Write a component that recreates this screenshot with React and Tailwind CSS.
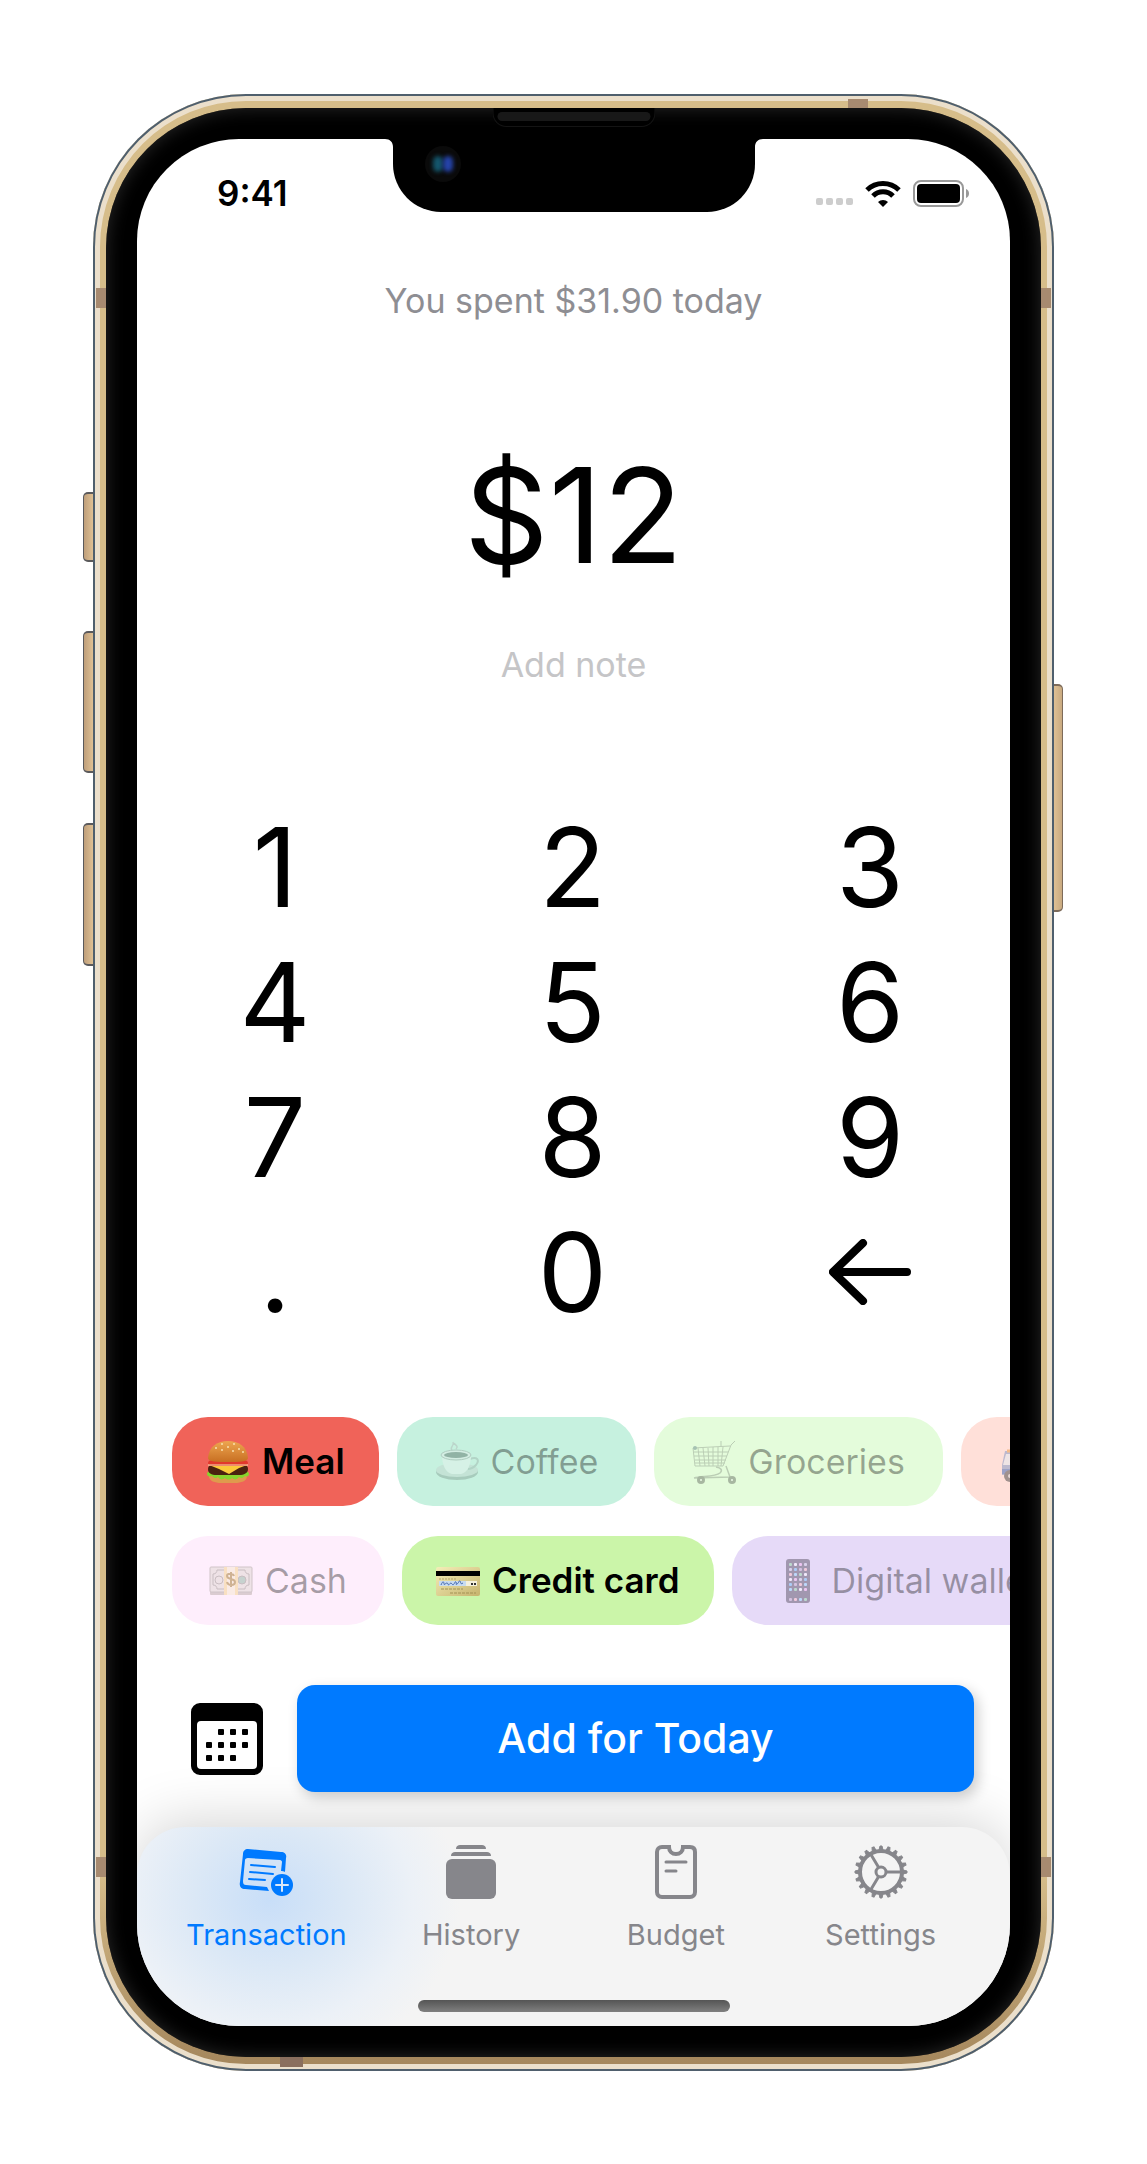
import { useState } from "react";

const KEYS = ["1", "2", "3", "4", "5", "6", "7", "8", "9", ".", "0"];

function BurgerIcon() {
  return (
    <svg viewBox="0 0 44 44" className="h-11 w-11" aria-hidden="true">
      <defs>
        <linearGradient id="bun" x1="0" y1="0" x2="0" y2="1">
          <stop offset="0" stopColor="#eda650" />
          <stop offset="1" stopColor="#c86f22" />
        </linearGradient>
      </defs>
      <path d="M3 36h38c0 5-6 7-12 7H15C9 43 3 41 3 36Z" fill="#df9a4d" />
      <path d="M1 34c0-3 5-4 21-4s21 1 21 4c0 2-2 3-4 2-2 2-4 3-6 1-2 3-5 3-7 1-2 2-5 2-7 0-2 2-5 2-7-1-2 2-4 1-6-1-3 1-5 0-5-2Z" fill="#86d52c" />
      <path d="M2 29c0-3 2-4 4-4h32c3 0 4 2 4 4 0 4-4 6-9 6H11c-6 0-9-2-9-6Z" fill="#4a220f" />
      <path d="M3 25h38l-8 3-10 6-10-5Z" fill="#fbc93a" />
      <path d="M2 23c0-2 2-3 5-3h30c3 0 5 1 5 3s-3 3-5 3H7c-3 0-5-1-5-3Z" fill="#e2382c" />
      <path d="M2 25h40" stroke="#f7dfb0" strokeWidth="1" />
      <path d="M2 18C3 6 12 1 22 1s19 5 20 17c0 4-9 4-20 4S2 22 2 18Z" fill="url(#bun)" />
      <g fill="#f8dfae">
        <circle cx="10" cy="8" r="1" /><circle cx="16" cy="4" r="1" /><circle cx="22" cy="7" r="1" />
        <circle cx="28" cy="4" r="1" /><circle cx="33" cy="9" r="1" /><circle cx="16" cy="10" r="1" />
        <circle cx="27" cy="11" r="1" /><circle cx="37" cy="12" r="1" />
      </g>
    </svg>
  );
}

function CoffeeIcon() {
  return (
    <svg viewBox="0 0 44 44" className="h-11 w-11 opacity-60" aria-hidden="true">
      <path d="M17 10c-3-3 3-4 1-8M21 9c3-3-1-4-2-6" fill="none" stroke="#b5c4be" strokeWidth="1.5" />
      <ellipse cx="22" cy="32" rx="21" ry="8" fill="#93b3a6" />
      <ellipse cx="22" cy="30" rx="21" ry="7" fill="#c3dbd1" />
      <path d="M35 19c7-3 10 1 6 6-2 2-5 4-8 4" fill="none" stroke="#a5c2b6" strokeWidth="2" />
      <path d="M7 15h29c0 10-4 18-10 19h-9C11 33 7 25 7 15Z" fill="#e2f2eb" />
      <ellipse cx="21" cy="15" rx="15" ry="5" fill="#dcebe5" stroke="#9fb5ac" />
      <ellipse cx="21" cy="15" rx="12" ry="3" fill="#6f8b80" />
    </svg>
  );
}

function CartIcon() {
  return (
    <svg viewBox="0 0 44 44" className="h-11 w-11 opacity-40" aria-hidden="true">
      <g fill="none" stroke="#7f8a7d">
        <path d="m43 1-4 4-8 21H3L1 8l37-2" strokeWidth="1" />
        <path d="M2 12h34M2 16h33M3 20h31M3 23h30M6 8l2 18M11 8l2 18M16 8l1 18M21 7v19M26 7v19M31 7l-2 19M29 1v5" strokeWidth="1" />
        <path d="M24 27c5 1 7 3 4 6-5 4-18 3-26 5M34 26l4 11-36 1" strokeWidth="1.5" />
      </g>
      <circle cx="9" cy="40" r="4" fill="#4d524c" /><circle cx="40" cy="40" r="4" fill="#4d524c" />
      <circle cx="9" cy="40" r="1" fill="#fff" /><circle cx="40" cy="40" r="1" fill="#fff" />
      <circle cx="3" cy="8" r="2" fill="#4a6e78" />
    </svg>
  );
}

function TruckIcon() {
  return (
    <svg viewBox="0 0 44 44" className="h-11 w-11 opacity-50" aria-hidden="true">
      <path d="M13 5h31v30H13Z" fill="#d8d8d8" />
      <path d="M4 11h12v24H1V25Z" fill="#7c93c5" />
      <path d="M5 14h6v11H2Z" fill="#dfe9f2" />
      <path d="M1 29h15v5H1Z" fill="#3a64b5" />
      <path d="M6 11h5" stroke="#ec963a" strokeWidth="3" />
      <circle cx="9" cy="36" r="6" fill="#444" /><circle cx="9" cy="36" r="2" fill="#ccc" />
    </svg>
  );
}

function CashIcon() {
  return (
    <svg viewBox="0 0 44 44" className="h-11 w-11 opacity-50" aria-hidden="true">
      <rect x="1" y="9" width="42" height="27" rx="1" fill="#b9aca8" />
      <rect x="1" y="8" width="42" height="25" rx="1" fill="#dfd8d2" stroke="#a39b95" />
      <path d="M4 15c3 0 4-2 4-4h28c0 2 1 4 4 4v11c-3 0-4 2-4 4H8c0-2-1-4-4-4Z" fill="none" stroke="#968e88" />
      <circle cx="10" cy="21" r="4" fill="none" stroke="#968e88" />
      <circle cx="33" cy="21" r="4" fill="#8fb7a3" stroke="#968e88" />
      <rect x="15" y="8" width="14" height="28" fill="#f6d489" />
      <rect x="18" y="8" width="8" height="28" fill="#f7e9d0" />
      <path d="M25 17c-1-3-7-3-7 0 0 4 8 2 8 6 0 4-7 4-8 0M22 13v15" fill="none" stroke="#a1772c" strokeWidth="2" />
    </svg>
  );
}

function CardIcon() {
  return (
    <svg viewBox="0 0 44 44" className="h-11 w-11" aria-hidden="true">
      <defs>
        <linearGradient id="card" x1="0" y1="0" x2="1" y2="1">
          <stop offset="0" stopColor="#f4eeb8" />
          <stop offset="1" stopColor="#c6b36d" />
        </linearGradient>
      </defs>
      <rect x="0" y="8" width="44" height="29" rx="2" fill="url(#card)" />
      <path d="M0 12h44v5H0Z" fill="#000" />
      <path d="M3 22h27v5H3Z" fill="#c8dcf0" />
      <path d="M30 22h11v5H30Z" fill="#f4f0dc" />
      <path d="M5 26c2-5 3-3 3-1s3-3 4 0 2-3 4 0 3-4 4-2-1 3 1 2 2-4 3-3 0 4 3 2" fill="none" stroke="#4468b0" />
      <path d="M35 25h5" stroke="#333" strokeWidth="2" strokeDasharray="2 1" />
      <path d="M5 30h22M14 34h26" stroke="#a39254" strokeDasharray="3 1" />
      <path d="M3 20h18" stroke="#b3a56b" strokeWidth="1" strokeDasharray="2 1" />
    </svg>
  );
}

function PhoneIcon() {
  const colors = ["#7ed98f", "#fff", "#f6a6e8", "#c8c8d8", "#58b7f5", "#bba0c0", "#ffb0b0", "#7fd4ff"];
  return (
    <svg viewBox="0 0 44 44" className="h-11 w-11 opacity-40" aria-hidden="true">
      <rect x="10" y="0" width="24" height="44" rx="3" fill="#3b3443" />
      {[0, 1, 2, 3, 4, 5, 7].map((row) =>
        [0, 1, 2, 3].map((col) => (
          <rect key={`${row}-${col}`} x={13 + col * 5} y={4 + row * 5} width="3" height="3" rx="1" fill={colors[(row * 3 + col) % 8]} />
        ))
      )}
    </svg>
  );
}

const CATEGORIES = [
  { label: "Meal", Icon: BurgerIcon, color: "bg-[#f06359]", pad: "px-[34px]" },
  { label: "Coffee", Icon: CoffeeIcon, color: "bg-[#c6f1df]", pad: "px-[38px]" },
  { label: "Groceries", Icon: CartIcon, color: "bg-[#e4fcdb]", pad: "px-[38px]" },
  { label: "Transport", Icon: TruckIcon, color: "bg-[#ffe0d9]", pad: "px-10", iconOnly: true },
];

const METHODS = [
  { label: "Cash", Icon: CashIcon, color: "bg-[#feeefc]", pad: "px-[37px]" },
  { label: "Credit card", Icon: CardIcon, color: "bg-[#cbf5a9]", pad: "px-[34px]" },
  { label: "Digital wallet", Icon: PhoneIcon, color: "bg-[#e6daf8]", pad: "px-11" },
];

function ChipRow({ items, name, selected, onSelect }) {
  return (
    <div role="group" aria-label={name} className="flex gap-[18px] overflow-hidden pl-[35px]">
      {items.map(({ label, Icon, color, pad, iconOnly }) => (
        <button
          key={label}
          type="button"
          aria-label={label}
          aria-pressed={selected === label}
          onClick={() => onSelect(label)}
          className={`flex h-[89px] shrink-0 items-center gap-3 rounded-[36px] whitespace-nowrap ${color} ${pad} ${
            selected === label ? "text-[35px] font-semibold text-black" : "text-[34px] text-black/35"
          }`}
        >
          <Icon />
          {iconOnly ? null : label}
        </button>
      ))}
    </div>
  );
}

function BackArrow() {
  return (
    <svg viewBox="0 0 82 66" className="h-[66px] w-[82px]" fill="none" stroke="currentColor" strokeWidth="8" strokeLinecap="round" strokeLinejoin="round" aria-hidden="true">
      <path d="M78 33H5M34 4 4 33l30 29" />
    </svg>
  );
}

function CalendarIcon() {
  const dots = [[28, 26], [40, 26], [52, 26], [16, 39], [28, 39], [40, 39], [52, 39], [16, 52], [28, 52], [40, 52]];
  return (
    <svg viewBox="0 0 74 72" className="h-[72px] w-[74px]" aria-hidden="true">
      <path fillRule="evenodd" d="M10 0h54a9 9 0 0 1 9 9v54a9 9 0 0 1-9 9H10a9 9 0 0 1-9-9V9a9 9 0 0 1 9-9Zm1 18a4 4 0 0 0-4 4v40a4 4 0 0 0 4 4h52a4 4 0 0 0 4-4V22a4 4 0 0 0-4-4Z" />
      {dots.map(([x, y]) => (
        <rect key={`${x}-${y}`} x={x} y={y} width="6" height="6" rx="1" />
      ))}
    </svg>
  );
}

function TransactionIcon() {
  return (
    <svg viewBox="0 0 54 54" className="h-[54px] w-[54px]" aria-hidden="true">
      <path fill="currentColor" fillRule="evenodd" d="M9 4l33 3c4 0 6 3 5 6l-1 14c-1-1-3-1-4-1l1-9c0-1-1-2-2-2L9 13c-2 0-3 1-3 2L4 36c0 3 1 4 3 4l21 2 2 4-24-2c-4 0-6-3-5-7L4 9c0-3 2-5 5-5Z" />
      <path d="m12 20 24 2M11 27l23 2M10 34l16 1" fill="none" stroke="currentColor" strokeWidth="2" strokeLinecap="round" />
      <circle cx="43" cy="40" r="11" fill="currentColor" />
      <path d="M43 34v12M37 40h12" stroke="#dbe8f7" strokeWidth="2" strokeLinecap="round" />
    </svg>
  );
}

function HistoryIcon() {
  return (
    <svg viewBox="0 0 54 54" className="h-[54px] w-[54px]" fill="currentColor" aria-hidden="true">
      <path d="M12 4c0-3 2-4 4-4h22c2 0 4 1 4 4ZM7 11c0-3 2-4 4-4h32c2 0 4 1 4 4Z" />
      <rect x="2" y="14" width="50" height="40" rx="6" />
    </svg>
  );
}

function BudgetIcon() {
  return (
    <svg viewBox="0 0 54 54" className="h-[54px] w-[54px]" fill="none" stroke="currentColor" aria-hidden="true">
      <path d="M13 2h7c0 4 3 7 7 7s7-3 7-7h7c4 0 5 2 5 5v40c0 3-2 5-5 5H13c-3 0-5-2-5-5V7c0-3 2-5 5-5Z" strokeWidth="4" />
      <path d="M17 17h20M17 26h10" strokeWidth="3" strokeLinecap="round" />
    </svg>
  );
}

function SettingsIcon() {
  const teeth = Array.from({ length: 20 }, (_, i) => i * 18);
  return (
    <svg viewBox="0 0 54 54" className="h-[54px] w-[54px]" fill="none" stroke="currentColor" aria-hidden="true">
      <circle cx="27" cy="27" r="21" strokeWidth="4" />
      <circle cx="27" cy="27" r="5" strokeWidth="3" />
      <path d="M32 27h16M25 23 16 8M25 31l-9 15" strokeWidth="3" />
      {teeth.map((a) => (
        <path key={a} d="M49 25l4 1v2l-4 1Z" fill="currentColor" strokeWidth="1" transform={`rotate(${a} 27 27)`} />
      ))}
    </svg>
  );
}

const TABS = [
  { label: "Transaction", Icon: TransactionIcon },
  { label: "History", Icon: HistoryIcon },
  { label: "Budget", Icon: BudgetIcon },
  { label: "Settings", Icon: SettingsIcon },
];

function StatusBar() {
  return (
    <header className="flex h-10 items-center justify-between pr-[41px] pl-20">
      <time className="text-[35px] leading-10 font-semibold">9:41</time>
      <div className="flex items-center gap-3">
        <div className="mt-4 flex gap-[3px]">
          {[0, 1, 2, 3].map((n) => (
            <span key={n} className="h-[7px] w-[7px] rounded-[2px] bg-[#cdcdcd]" />
          ))}
        </div>
        <svg viewBox="0 0 36 27" className="h-[27px] w-9" fill="none" stroke="#000" aria-hidden="true">
          <path d="M2 10a23 23 0 0 1 32 0M8 16a14 14 0 0 1 20 0" strokeWidth="5" />
          <path d="M18 27l-5-5a7 7 0 0 1 10 0Z" fill="#000" stroke="none" />
        </svg>
        <svg viewBox="0 0 56 27" className="h-[27px] w-14" aria-hidden="true">
          <rect x="1" y="1" width="49" height="25" rx="7" fill="none" stroke="#999" strokeWidth="2" />
          <rect x="4" y="4" width="43" height="19" rx="4" />
          <path d="M53 9c4 1 4 8 0 9Z" fill="#999" />
        </svg>
      </div>
    </header>
  );
}

function Notch() {
  return (
    <div aria-hidden="true">
      <div className="absolute top-[14px] left-1/2 h-[19px] w-[163px] -translate-x-1/2 rounded-b-[14px] border border-t-0 border-[#141414] bg-black px-1 pt-1">
        <div className="h-[9px] rounded-full bg-[#181818]" />
      </div>
      <div className="absolute top-[45px] left-1/2 h-[73px] w-[362px] -translate-x-1/2 rounded-b-[48px] bg-black">
        <svg viewBox="0 0 8 8" className="absolute top-0 -left-2 h-2 w-2"><path d="M0 0h8v8C8 3 5 0 0 0Z" /></svg>
        <svg viewBox="0 0 8 8" className="absolute top-0 -right-2 h-2 w-2"><path d="M8 0H0v8c0-5 3-8 8-8Z" /></svg>
        <div className="ml-8 mt-[7px] flex h-9 w-9 items-center justify-center rounded-full bg-[#0a0a0a]">
          <span className="h-4 w-[10px] rounded-full bg-[#14566c] blur-[2px]" />
          <span className="h-4 w-[10px] rounded-full bg-[#2543a8] blur-[2px]" />
        </div>
      </div>
    </div>
  );
}

function Hardware() {
  const left = "absolute right-full w-[10px] rounded-l-[5px] border-y-2 border-l border-[#5b5a5c] bg-linear-to-r from-[#bf9f7b] to-[#dfc093]";
  const band = "absolute bg-[#a78a70]";
  return (
    <div aria-hidden="true">
      <div className={`${left} top-[398px] h-[70px]`} />
      <div className={`${left} top-[537px] h-[142px]`} />
      <div className={`${left} top-[729px] h-[143px]`} />
      <div className="absolute top-[590px] left-full h-[228px] w-[9px] rounded-r-[5px] border-y-2 border-r border-[#7d6b5a] bg-linear-to-r from-[#dfc093] to-[#c9aa80]" />
      <div className={`${band} top-[194px] left-[3px] h-5 w-[10px]`} />
      <div className={`${band} top-[194px] right-[3px] h-5 w-[10px]`} />
      <div className={`${band} bottom-[194px] left-[3px] h-5 w-[10px]`} />
      <div className={`${band} right-[3px] bottom-[194px] h-5 w-[10px]`} />
      <div className={`${band} top-[5px] right-[186px] h-[9px] w-5`} />
      <div className="absolute bottom-1 left-[187px] h-[10px] w-[23px] bg-[#8a6f5e]" />
    </div>
  );
}

export default function App() {
  const [amount, setAmount] = useState("12");
  const [category, setCategory] = useState("Meal");
  const [method, setMethod] = useState("Credit card");
  const [tab, setTab] = useState("Transaction");

  return (
    <main className="min-h-screen bg-white px-[93px] py-[94px] font-['Inter',sans-serif] text-black">
      <div className="relative rounded-[153px] bg-linear-to-b from-[#d6bd8a] from-90% to-[#a3855b] px-[13px] py-[14px] shadow-[inset_0_0_0_2px_#4f5f6d,inset_0_0_0_7px_#ebdfcb]">
        <Hardware />
        <div className="rounded-[140px] bg-black px-[31px] py-[31px] shadow-[inset_0_0_18px_#2a2a2a]">
          <div className="flex flex-col overflow-hidden rounded-[102px] bg-white pt-[34px]">
            <StatusBar />
            <p className="mt-[66px] text-center text-[34px] leading-[44px] text-[#8e8e93]">You spent $31.90 today</p>
            <output className="mt-[122px] text-center text-[132px] leading-[140px]">${amount}</output>
            <input
              type="text"
              aria-label="Note"
              placeholder="Add note"
              className="mt-[57px] h-11 w-full bg-transparent text-center text-[34px] outline-none placeholder:text-[#c5c5c7]"
            />
            <div className="mt-[113px] grid grid-cols-[200px_200px_200px] justify-between pr-10 pl-[38px]">
              {KEYS.map((k) => (
                <button key={k} type="button" onClick={() => setAmount(amount + k)} className="h-[135px] text-[110px] leading-none">
                  {k}
                </button>
              ))}
              <button type="button" aria-label="Delete" onClick={() => setAmount(amount.slice(0, -1))} className="flex h-[135px] items-center justify-center">
                <BackArrow />
              </button>
            </div>
            <div className="mt-[78px] flex flex-col gap-[30px]">
              <ChipRow name="Category" items={CATEGORIES} selected={category} onSelect={setCategory} />
              <ChipRow name="Payment method" items={METHODS} selected={method} onSelect={setMethod} />
            </div>
            <div className="relative z-10 mt-[60px] flex items-center gap-[33px] pr-9 pl-[53px]">
              <button type="button" aria-label="Choose date">
                <CalendarIcon />
              </button>
              <button type="button" className="h-[107px] flex-1 rounded-[18px] bg-[#007aff] text-[41px] font-medium text-white shadow-[4px_5px_14px_rgba(0,0,0,0.2)]">
                Add for Today
              </button>
            </div>
            <nav className="mt-[35px] rounded-t-[48px] bg-[#f4f4f4] bg-[radial-gradient(ellipse_190px_170px_at_133px_72px,#c8def8_0%,#dbe8f6_40%,#ecf1f7_75%,#f4f4f4_100%)] px-[27px] pt-[18px] pb-[14px] shadow-[0_-6px_56px_rgba(0,0,0,0.17)]">
              <div className="grid grid-cols-4">
                {TABS.map(({ label, Icon }) => (
                  <button
                    key={label}
                    type="button"
                    aria-current={tab === label ? "page" : undefined}
                    onClick={() => setTab(label)}
                    className={`flex flex-col items-center gap-[18px] text-[29px] leading-9 ${tab === label ? "text-[#007aff]" : "text-[#86868b]"}`}
                  >
                    <Icon />
                    {label}
                  </button>
                ))}
              </div>
              <div className="mx-auto mt-[47px] h-3 w-[312px] rounded-full bg-linear-to-b from-[#555] to-[#808080]" />
            </nav>
          </div>
        </div>
        <Notch />
      </div>
    </main>
  );
}
